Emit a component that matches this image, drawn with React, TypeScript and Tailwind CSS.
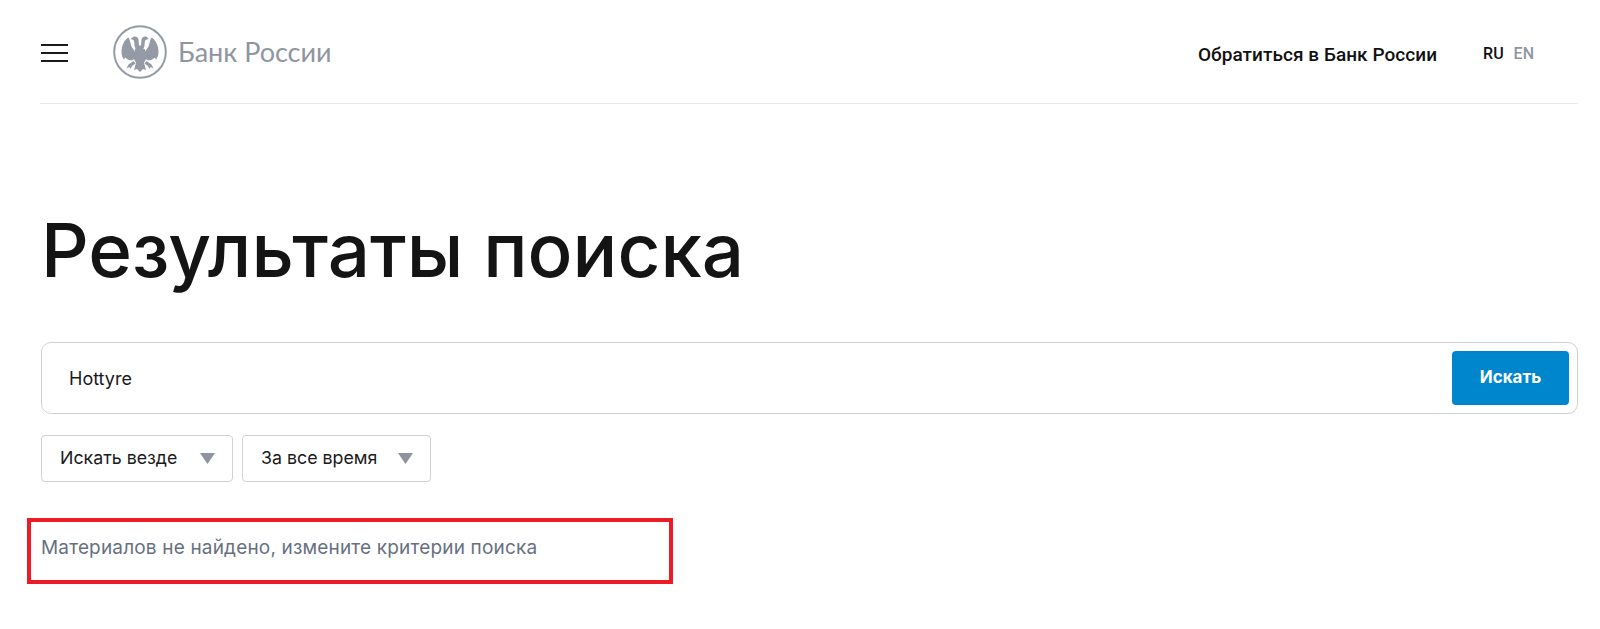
import React from 'react';

const Eagle = () => (
  <svg width="54" height="54" viewBox="0 0 54 54" className="shrink-0">
    <circle cx="27" cy="27" r="25.8" fill="none" stroke="#949aa6" strokeWidth="2" />
    <g fill="#949aa6">
      {/* heads */}
      <path d="M20 12c2.500-1.200 5 0 5.500 2.500l.5 6h2l.5-6c.5-2.500 3-3.700 5.500-2.500l1.500 2-3 1c-.8 1.500-1 4-1 6l-1.500 4h-7l-1.500-4c0-2-.2-4.500-1-6l-3-1z" />
      {/* wings */}
      <path d="M8.500 27c0-6 2.500-12 7-14.500 1.500 2.500 2 6 3 9l4 6v6l-4 2c-3-.3-4.500-1.500-6.500-3l-1 2.500c-1.500-2.500-2.500-5-2.500-8z" />
      <path d="M45.500 27c0-6-2.500-12-7-14.500-1.500 2.500-2 6-3 9l-4 6v6l4 2c3-.3 4.500-1.500 6.500-3l1 2.500c1.500-2.500 2.500-5 2.500-8z" />
      {/* body and tail */}
      <path d="M22 24h10l1 10-2 4 2 7-3-1-3 3-3-3-3 1 2-7-2-4z" />
      {/* legs */}
      <path d="M20.500 36l-5 3.500-2 4 3-1.500 1 2 1.500-3 3.500-2.500z" />
      <path d="M33.500 36l5 3.500 2 4-3-1.500-1 2-1.500-3-3.500-2.500z" />
    </g>
  </svg>
);

const Select = ({ label, className }: { label: string; className: string }) => (
  <div className={`flex items-center justify-between h-[47px] pl-[18px] pr-[17px] bg-white border border-[#cfd1d6] rounded-[4px] text-[17.800px] text-[#1a1a1a] ${className}`}>
    <span>{label}</span>
    <svg width="15" height="11" viewBox="0 0 15 11">
      <path d="M0 0h15l-7.500 11z" fill="#8e939e" />
    </svg>
  </div>
);

export default function App() {
  return (
    <div className="w-[1600px] h-[629px] overflow-hidden bg-white font-['Inter',sans-serif]">
      {/* Header */}
      <header className="ml-[40px] mr-[22px] h-[104px] flex items-center border-b border-[#e8e9eb]">
        <div className="w-[27px] ml-[1px] mt-[2px] flex flex-col gap-[6px]">
          <div className="h-[2px] bg-[#1a1a1a]" />
          <div className="h-[2px] bg-[#1a1a1a]" />
          <div className="h-[2px] bg-[#1a1a1a]" />
        </div>
        <div className="ml-[45px] flex items-center gap-[11px]">
          <Eagle />
          <span className="font-['Lato',sans-serif] font-normal text-[27px] mt-[1px] text-[#8f95a1]">Банк России</span>
        </div>
        <div className="ml-auto flex items-center mt-[8px]">
          <span className="font-['Roboto',sans-serif] font-medium text-[19px] tracking-[0.05px] text-[#111]">Обратиться в Банк России</span>
          <div className="ml-[46px] mr-[44px] flex gap-[10px] font-['Roboto',sans-serif] font-medium text-[16px] -mt-[3px]">
            <span className="text-[#111]">RU</span>
            <span className="text-[#8f95a1]">EN</span>
          </div>
        </div>
      </header>

      <main className="pl-[41px] pr-[22px]">
        <h1 className="mt-[99px] text-[74.500px] leading-[94px] font-medium text-[#141414]">Результаты поиска</h1>

        {/* Search box */}
        <div className="mt-[45px] h-[72px] flex items-center justify-between pl-[27px] pr-[8px] border border-[#cfd1d6] rounded-[10px]">
          <span className="text-[18px] text-[#1a1a1a]">Hottyre</span>
          <button className="w-[117px] h-[54px] bg-[#0086cc] rounded-[4px] text-white font-bold text-[17px]">Искать</button>
        </div>

        {/* Filters */}
        <div className="mt-[21px] flex gap-[9px]">
          <Select label="Искать везде" className="w-[192px]" />
          <Select label="За все время" className="w-[189px]" />
        </div>

        {/* Message */}
        <div className="mt-[36px] -ml-[14px] w-[646px] h-[66px] flex items-center pl-[10px] pb-[5px] border-[4px] border-[#ed1c24]">
          <span className="text-[19px] tracking-[0.17px] text-[#677080]">Материалов не найдено, измените критерии поиска</span>
        </div>
      </main>
    </div>
  );
}
